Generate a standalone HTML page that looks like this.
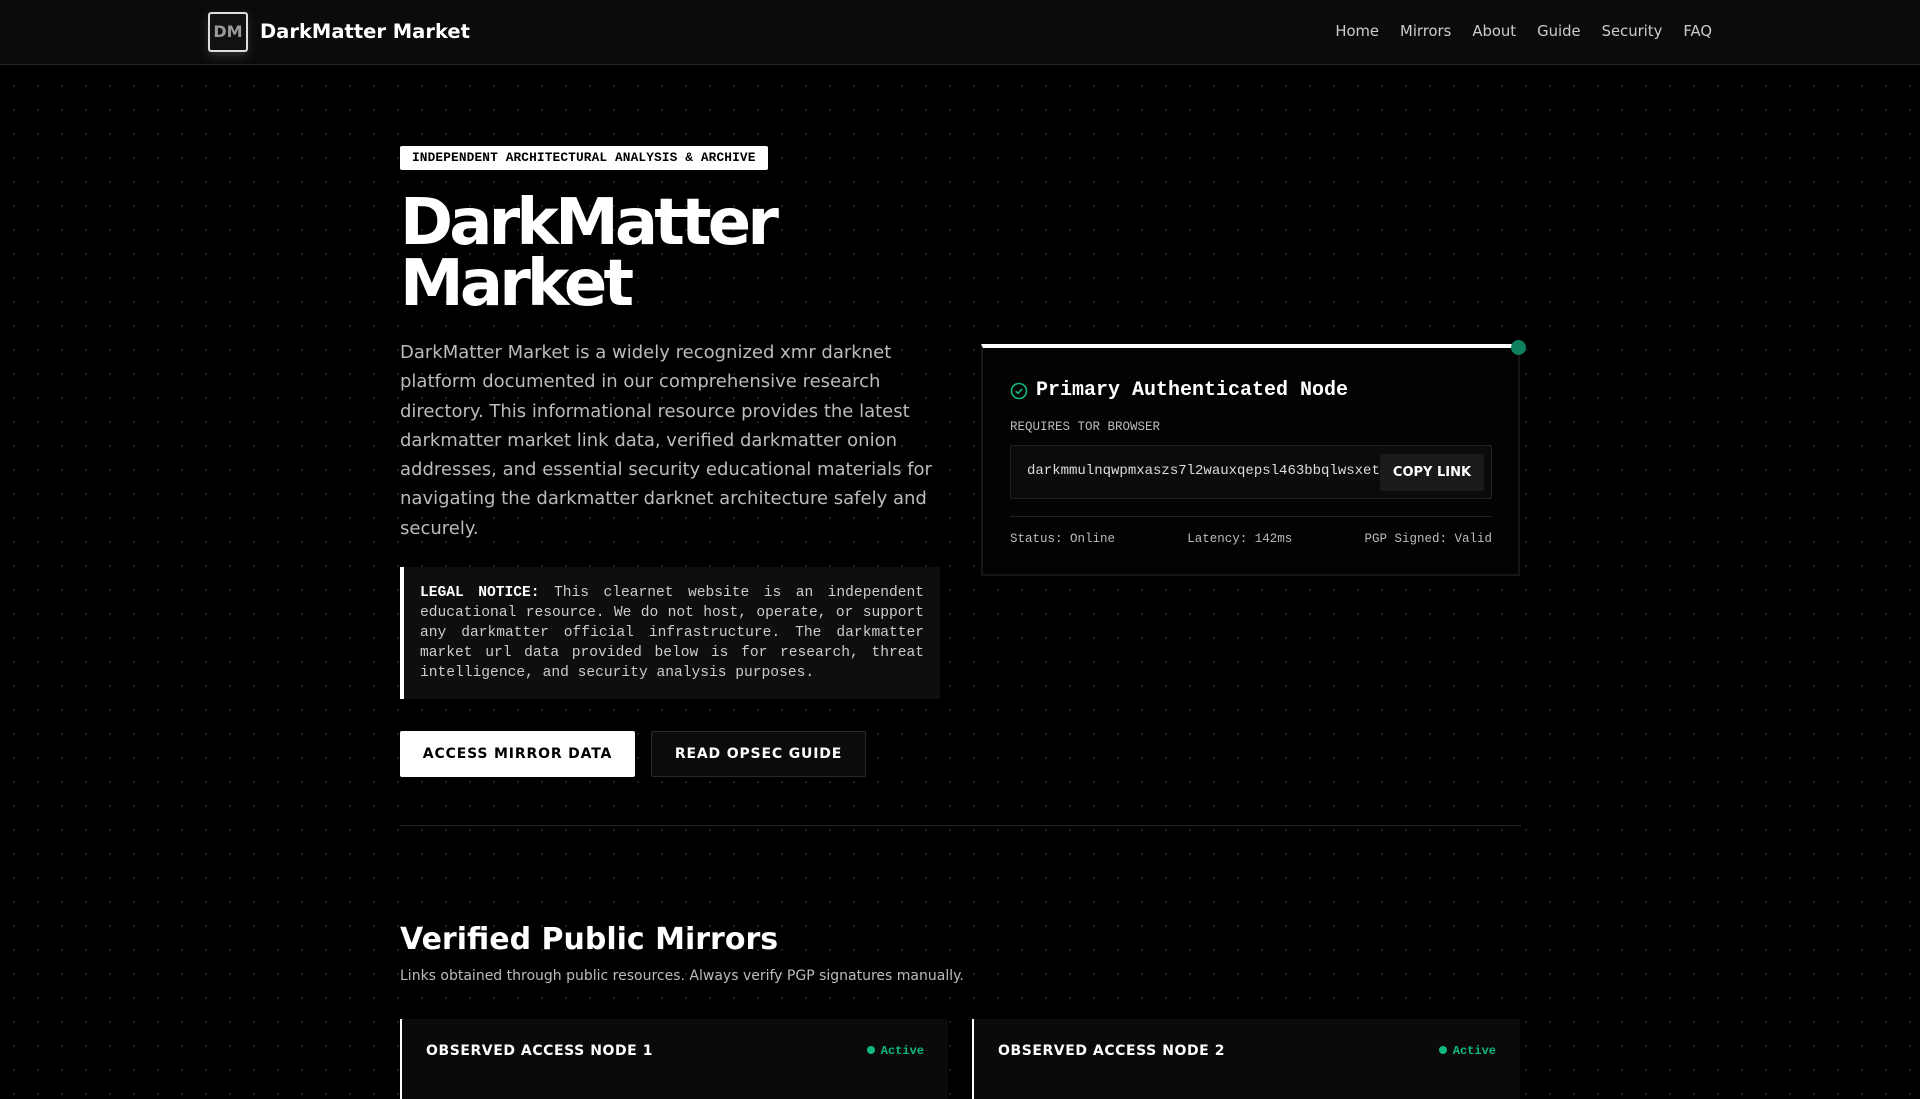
<!DOCTYPE html>
<html><head><meta charset="utf-8"><style>
*{box-sizing:border-box;margin:0;padding:0}
body{width:1920px;height:1080px;overflow:hidden;background:#000;color:#fff;font-family:"DejaVu Sans","Liberation Sans",sans-serif;
background-image:radial-gradient(circle,#1f1f1f 1px,transparent 1.3px);background-size:24px 24px;background-position:2px 2px;position:relative}
.mono{font-family:"Liberation Mono","DejaVu Sans Mono",monospace}
nav{position:absolute;left:0;top:0;width:1920px;height:65px;background:#0b0b0b;border-bottom:1px solid #222}
.logo{position:absolute;left:208px;top:12px;width:40px;height:40px;border:2px solid #ddd;border-radius:3px;background:#111;color:#999;font-weight:bold;font-size:16px;line-height:36px;text-align:center;box-shadow:0 4px 10px rgba(255,255,255,.15)}
.brand{position:absolute;left:260px;top:20px;font-size:19.5px;font-weight:bold}
.links{position:absolute;right:208px;top:23px;font-size:14.8px;color:#ccc}
.links span{margin-left:21px}
.badge{position:absolute;left:400px;top:146px;height:24px;padding:0 12px;background:#fff;color:#000;font-size:12.8px;font-weight:bold;line-height:24px;border-radius:2px;letter-spacing:.01em}
h1{position:absolute;left:400px;top:193px;font-size:64px;line-height:61px;font-weight:bold;letter-spacing:-0.06em}
.lead{position:absolute;left:400px;top:338px;width:545px;font-size:18px;line-height:29.3px;color:#bbb}
.legal{position:absolute;left:400px;top:567px;width:540px;height:132px;background:#0e0e0e;border-left:4px solid #fff;padding:16px 16px 0 16px;font-size:14.6px;line-height:20px;color:#ccc;text-align:justify}
.legal b{color:#fff}
.btn{position:absolute;top:731px;height:46px;font-size:14px;font-weight:bold;letter-spacing:.06em;line-height:46px;text-align:center;border-radius:2px}
.b1{left:400px;width:235px;background:#fff;color:#000}
.b2{left:651px;width:215px;background:#0b0b0b;border:1px solid #2a2a2a;color:#fff;line-height:44px}
.hr{position:absolute;left:400px;top:825px;width:1121px;height:1px;background:#262626}
.card{position:absolute;left:981px;top:344px;width:539px;height:232px;background:#030303;border:2px solid #161616;border-top:4px solid #fff}
.dot{position:absolute;left:1511px;top:340px;width:15px;height:15px;border-radius:50%;background:#118060}
.ct{position:absolute;left:27px;top:31px;font-size:20px;font-weight:bold;display:flex;align-items:center;gap:8px}
.lab{position:absolute;left:27px;top:72px;font-size:12.5px;color:#bbb}
.inp{position:absolute;left:27px;top:97px;width:482px;height:54px;background:#0b0b0b;border:1px solid #222;border-radius:2px}
.inp .u{position:absolute;left:16px;top:17px;font-size:14px;color:#ddd}
.copy{position:absolute;right:7px;top:8px;width:104px;height:37px;background:#1a1a1a;font-family:"DejaVu Sans",sans-serif;font-size:13px;font-weight:bold;line-height:37px;text-align:center;border-radius:2px}
.sep{position:absolute;left:27px;top:168px;width:482px;height:1px;background:#222}
.st{position:absolute;left:27px;top:184px;width:482px;display:flex;justify-content:space-between;font-size:12.5px;color:#bbb}
h2{position:absolute;left:400px;top:922px;font-size:30px;font-weight:bold}
.sub{position:absolute;left:400px;top:968px;font-size:14px;color:#bbb}
.m{position:absolute;top:1019px;width:548px;height:80px;background:#0a0a0a;border-left:2px solid #fff}
.m .t{position:absolute;left:24px;top:24px;font-size:14px;font-weight:bold;letter-spacing:.04em}
.m .a{position:absolute;right:24px;top:25px;font-size:12px;font-weight:bold;color:#10b981}
.m .a:before{content:"";display:inline-block;width:8px;height:8px;border-radius:50%;background:#10b981;margin-right:6px}
</style></head><body>
<nav><div class="logo">DM</div><div class="brand">DarkMatter Market</div>
<div class="links"><span>Home</span><span>Mirrors</span><span>About</span><span>Guide</span><span>Security</span><span>FAQ</span></div></nav>
<div class="badge mono">INDEPENDENT ARCHITECTURAL ANALYSIS &amp; ARCHIVE</div>
<h1>DarkMatter<br>Market</h1>
<p class="lead">DarkMatter Market is a widely recognized xmr darknet platform documented in our comprehensive research directory. This informational resource provides the latest darkmatter market link data, verified darkmatter onion addresses, and essential security educational materials for navigating the darkmatter darknet architecture safely and securely.</p>
<div class="legal mono"><b>LEGAL NOTICE:</b> This clearnet website is an independent educational resource. We do not host, operate, or support any darkmatter official infrastructure. The darkmatter market url data provided below is for research, threat intelligence, and security analysis purposes.</div>
<div class="btn b1">ACCESS MIRROR DATA</div>
<div class="btn b2">READ OPSEC GUIDE</div>
<div class="hr"></div>
<div class="card mono">
<div class="ct"><svg width="18" height="18" viewBox="0 0 18 18"><circle cx="9" cy="9" r="7.5" fill="none" stroke="#10b981" stroke-width="1.6"/><path d="M5.8 9.2l2.2 2.1 4.2-4.4" fill="none" stroke="#10b981" stroke-width="1.6"/></svg>Primary Authenticated Node</div>
<div class="lab">REQUIRES TOR BROWSER</div>
<div class="inp"><div class="u">darkmmulnqwpmxaszs7l2wauxqepsl463bbqlwsxet</div><div class="copy">COPY LINK</div></div>
<div class="sep"></div>
<div class="st"><span>Status: Online</span><span>Latency: 142ms</span><span>PGP Signed: Valid</span></div>
</div>
<div class="dot"></div>
<h2>Verified Public Mirrors</h2>
<div class="sub">Links obtained through public resources. Always verify PGP signatures manually.</div>
<div class="m" style="left:400px"><div class="t">OBSERVED ACCESS NODE 1</div><div class="a mono">Active</div></div>
<div class="m" style="left:972px"><div class="t">OBSERVED ACCESS NODE 2</div><div class="a mono">Active</div></div>
</body></html>
